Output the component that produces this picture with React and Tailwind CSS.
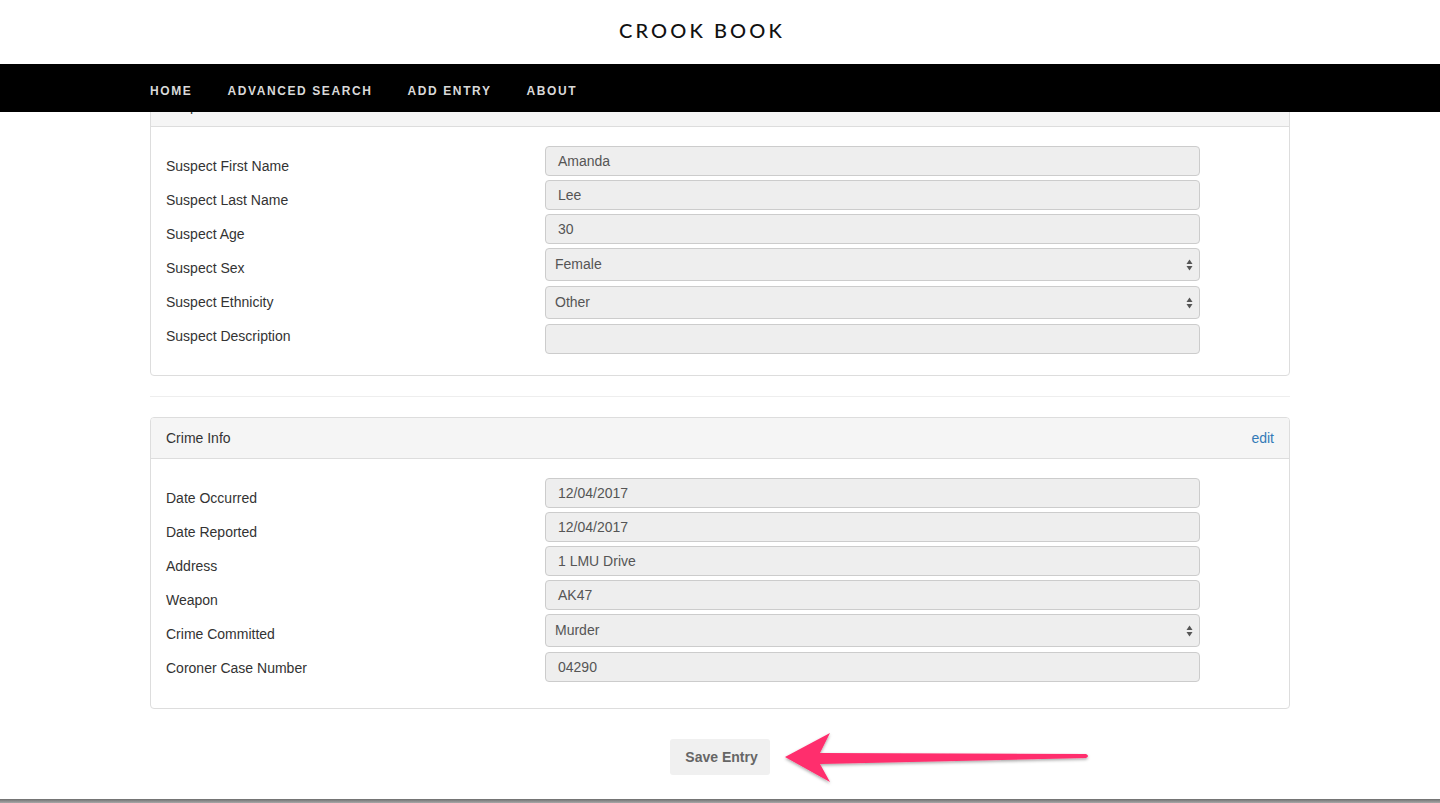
import React from "react";

const suspectFields = [
  { label: "Suspect First Name", value: "Amanda" },
  { label: "Suspect Last Name", value: "Lee" },
  { label: "Suspect Age", value: "30" },
  { label: "Suspect Sex", value: "Female", select: true },
  { label: "Suspect Ethnicity", value: "Other", select: true },
  { label: "Suspect Description", value: "" },
];

const crimeFields = [
  { label: "Date Occurred", value: "12/04/2017" },
  { label: "Date Reported", value: "12/04/2017" },
  { label: "Address", value: "1 LMU Drive" },
  { label: "Weapon", value: "AK47" },
  { label: "Crime Committed", value: "Murder", select: true },
  { label: "Coroner Case Number", value: "04290" },
];

function Field({ field }) {
  if (field.select) {
    return (
      <div className="h-[33px] mb-[5px] w-[655px] flex items-center justify-between bg-[#eeeeee] border border-[#cccccc] rounded-[4px] pl-[9px] pr-[6px] text-[14px] text-[#555555]">
        <span>{field.value}</span>
        <svg width="7" height="12" viewBox="0 0 7 12">
          <path d="M3.5 0.5 L6.5 5 L0.5 5 Z" fill="#555" />
          <path d="M3.5 11.5 L6.5 7 L0.5 7 Z" fill="#555" />
        </svg>
      </div>
    );
  }
  return (
    <div className="h-[30px] mb-[4px] w-[655px] flex items-center bg-[#eeeeee] border border-[#cccccc] rounded-[4px] px-[12px] text-[14px] text-[#555555]">
      {field.value}
    </div>
  );
}

function FieldGrid({ fields, bottom }) {
  return (
    <div className={`flex px-[15px] pt-[19px] ${bottom}`}>
      <div className="w-[379px] pt-[3px]">
        {fields.map((f) => (
          <div key={f.label} className="h-[34px] leading-[34px] text-[14px] text-[#333333]">
            {f.label}
          </div>
        ))}
      </div>
      <div>
        {fields.map((f) => (
          <Field key={f.label} field={f} />
        ))}
      </div>
    </div>
  );
}

export default function App() {
  return (
    <div className="h-[803px] overflow-hidden flex flex-col bg-white font-['Liberation_Sans',Arial,sans-serif]">
      {/* Brand */}
      <header className="h-[64px] shrink-0 flex items-center justify-center pb-[4px] pr-[36px] relative z-10 bg-white">
        <h1 className="text-[20px] leading-[24px] font-medium tracking-[3.1px] text-[#111111] font-['Lato','Liberation_Sans',sans-serif]">
          CROOK BOOK
        </h1>
      </header>

      {/* Nav bar */}
      <nav className="h-[48px] shrink-0 bg-black flex items-center pt-[6px] pl-[150px] gap-[35px] relative z-10">
        {["Home", "Advanced Search", "Add Entry", "About"].map((item) => (
          <a key={item} className="text-[12px] uppercase tracking-[1.6px] text-[#d9d9d9] font-semibold">
            {item}
          </a>
        ))}
      </nav>

      {/* Content */}
      <main className="flex-1 overflow-hidden">
        <div className="w-[1140px] mx-auto">
          {/* Suspect Info panel (scrolled under nav) */}
          <section className="-mt-[27px] border border-[#dddddd] rounded-[4px]">
            <div className="h-[41px] bg-[#f5f5f5] border-b border-[#dddddd] px-[15px] flex items-center text-[14px] text-[#333333]">
              Suspect Info
            </div>
            <FieldGrid fields={suspectFields} bottom="pb-[17px]" />
          </section>

          <hr className="my-[20px] border-t border-[#eeeeee]" />

          {/* Crime Info panel */}
          <section className="border border-[#dddddd] rounded-[4px] overflow-hidden">
            <div className="h-[41px] bg-[#f5f5f5] border-b border-[#dddddd] px-[15px] flex items-center justify-between text-[14px] text-[#333333]">
              <span>Crime Info</span>
              <a className="text-[#337ab7]">edit</a>
            </div>
            <FieldGrid fields={crimeFields} bottom="pb-[22px]" />
          </section>

          <div className="relative flex justify-center mt-[30px]">
            <button className="w-[100px] h-[36px] bg-[#f0f0f0] rounded-[3px] pl-[3px] text-[14px] font-bold text-[#666666]">
              Save Entry
            </button>
            <svg
              className="absolute left-[630px] top-[-9px]"
              width="320"
              height="60"
              viewBox="0 0 320 60"
            >
              <defs>
                <filter id="sh" x="-10%" y="-30%" width="120%" height="160%">
                  <feDropShadow dx="0" dy="1.5" stdDeviation="1.5" floodColor="#000" floodOpacity="0.35" />
                </filter>
              </defs>
              <path
                d="M5 27 L50 3 L40 23 L306 24 Q310 26 306 28 L40 34 L50 52 Z"
                fill="#ff2d6d"
                filter="url(#sh)"
              />
            </svg>
          </div>
        </div>
      </main>

      <div className="h-[4px] shrink-0 bg-gradient-to-b from-[#6e6e6e] to-[#a8a8a8]" />
    </div>
  );
}
